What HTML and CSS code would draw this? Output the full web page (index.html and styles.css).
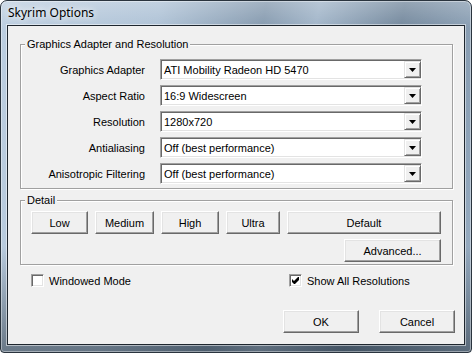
FILE: index.html
```html
<!DOCTYPE html>
<html>
<head>
<title>Skyrim Options</title>
<link rel="stylesheet" href="styles.css">
</head>
<body>
<div class="window">
  <div class="titlebar">Skyrim Options</div>
  <div class="client">

    <fieldset class="group group-adapter">
      <legend>Graphics Adapter and Resolution</legend>
      <div class="settings">
        <label class="setting-label">Graphics Adapter</label>
        <div class="combo"><span class="combo-text">ATI Mobility Radeon HD 5470</span><span class="combo-btn"></span></div>

        <label class="setting-label">Aspect Ratio</label>
        <div class="combo"><span class="combo-text">16:9 Widescreen</span><span class="combo-btn"></span></div>

        <label class="setting-label">Resolution</label>
        <div class="combo"><span class="combo-text">1280x720</span><span class="combo-btn"></span></div>

        <label class="setting-label">Antialiasing</label>
        <div class="combo"><span class="combo-text">Off (best performance)</span><span class="combo-btn"></span></div>

        <label class="setting-label">Anisotropic Filtering</label>
        <div class="combo"><span class="combo-text">Off (best performance)</span><span class="combo-btn"></span></div>
      </div>
    </fieldset>

    <fieldset class="group group-detail">
      <legend>Detail</legend>
      <div class="detail">
        <div class="detail-row">
          <button class="btn btn-low">Low</button>
          <button class="btn btn-medium">Medium</button>
          <button class="btn btn-high">High</button>
          <button class="btn btn-ultra">Ultra</button>
          <button class="btn btn-default">Default</button>
        </div>
        <div class="detail-row detail-row-end">
          <button class="btn btn-advanced">Advanced...</button>
        </div>
      </div>
    </fieldset>

    <div class="checks">
      <label class="check check-windowed"><span class="check-box"></span>Windowed Mode</label>
      <label class="check"><span class="check-box"><svg width="7" height="7" viewBox="0 0 7 7"><polygon points="0,2 2,4 6,0 7,0 7,3 3,7 2,7 0,5" fill="#000"/></svg></span>Show All Resolutions</label>
    </div>

    <div class="actions">
      <button class="btn btn-dialog">OK</button>
      <button class="btn btn-dialog">Cancel</button>
    </div>

  </div>
</div>
</body>
</html>
```

FILE: styles.css
```css
body { margin:0; font-family:"Liberation Sans", Arial, sans-serif; font-size:11px; color:#000; }

/* window frame */
.window {
  width:472px; height:353px; box-sizing:border-box;
  border:1px solid #2a343e; border-radius:7px 7px 4px 4px;
  padding:0 6px 7px;
  display:flex; flex-direction:column;
  background:
    linear-gradient(to bottom, rgba(255,255,255,.25), rgba(255,255,255,0) 28px, rgba(0,0,0,0) 70%, rgba(10,20,30,.45) 100%),
    linear-gradient(100deg, #bccee0 0%, #aec2d6 30%, #8499ae 50%, #a0b4c8 60%, #72879c 76%, #9bb0c5 100%);
  box-shadow:inset 0 0 0 1px rgba(255,255,255,.4);
}
.titlebar {
  height:24px; line-height:24px; padding-left:1px;
  font-family:"Noto Sans", "Open Sans", sans-serif; font-size:12px;
  text-shadow:0 0 6px #fff, 0 0 10px rgba(255,255,255,.8);
}
.client {
  flex:1; background:#f0f0f0;
  border:1px solid #1e262e;
  box-shadow:0 0 0 1px rgba(255,255,255,.5);
  padding:12px 11px 0 12px;
  display:flex; flex-direction:column;
}

/* group boxes */
.group {
  margin:0; padding:0; min-width:0;
  border:1px solid #a0a0a0;
  box-shadow:inset 1px 1px 0 #fff, 1px 1px 0 #fff;
}
.group legend {
  margin-left:4px; padding:0 2px;
  line-height:13px; background:#f0f0f0;
}
.group-detail { margin-top:5px; }

.settings {
  display:grid; grid-template-columns:1fr 262px; grid-auto-rows:21px;
  column-gap:15px; row-gap:5px;
  padding:8px 30px 4px 8px;
}
.setting-label { justify-self:end; align-self:center; }

/* combo box */
.combo {
  box-sizing:border-box; height:21px;
  border:1px solid; border-color:#a0a0a0 #fff #fff #a0a0a0;
  box-shadow:inset 1px 1px 0 #696969, inset -1px -1px 0 #e3e3e3;
  background:#fff;
  padding:1px 0 1px 1px;
  display:flex; align-items:center;
}
.combo-text { flex:1; padding-left:2px; }
.combo-btn {
  box-sizing:border-box; width:17px; height:17px;
  border:1px solid; border-color:#e3e3e3 #696969 #696969 #e3e3e3;
  box-shadow:inset 1px 1px 0 #fff, inset -1px -1px 0 #a0a0a0;
  background:#f0f0f0;
  display:flex; align-items:center; justify-content:center;
}
.combo-btn::after {
  content:""; width:7px; height:4px; margin-top:1px; background:#000;
  clip-path:polygon(0 0, 100% 0, 50% 100%);
}

/* buttons */
.btn {
  font:inherit; color:#000; height:23px; padding:0;
  box-sizing:border-box;
  border:1px solid; border-color:#fff #696969 #696969 #fff;
  box-shadow:inset -1px -1px 0 #a0a0a0, inset 1px 1px 0 #e3e3e3;
  background:#f0f0f0;
}
.detail { padding:4px 11px 2px 10px; }
.detail-row { display:flex; gap:7px; }
.detail-row-end { justify-content:flex-end; margin-top:5px; }
.btn-low { width:57px; }
.btn-medium { width:59px; }
.btn-high { width:58px; }
.btn-ultra { width:54px; }
.btn-default { width:154px; }
.btn-advanced { width:97px; }

/* check boxes */
.checks { display:flex; margin-top:9px; padding-left:11px; }
.check { display:flex; align-items:center; height:13px; }
.check-windowed { width:258px; }
.check-box {
  box-sizing:border-box; width:13px; height:13px; margin-right:5px;
  border:1px solid; border-color:#a0a0a0 #fff #fff #a0a0a0;
  box-shadow:inset 1px 1px 0 #696969, inset -1px -1px 0 #e3e3e3;
  background:#fff;
  display:flex; align-items:center; justify-content:center;
}
.check-box svg { display:block; }

.actions { display:flex; justify-content:flex-end; gap:20px; margin-top:23px; margin-right:-2px; }
.btn-dialog { width:76px; }
```
